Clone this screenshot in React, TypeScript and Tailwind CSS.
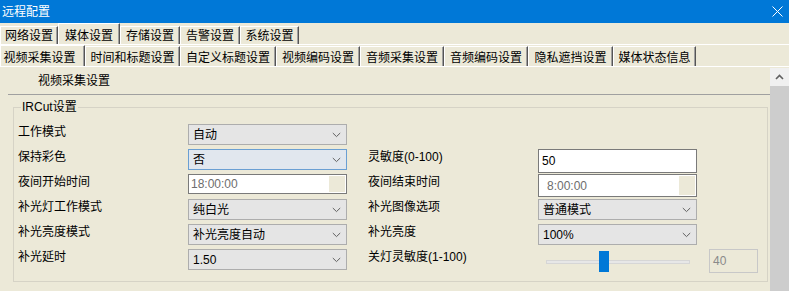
import React from 'react'

const FONT = "font-['Liberation_Sans','Noto_Sans_CJK_SC',sans-serif]"

const mainTabs = [
  { label: '网络设置', w: 'w-[58px]' },
  { label: '媒体设置', w: 'w-[62px]', active: true },
  { label: '存储设置', w: 'w-[60px]' },
  { label: '告警设置', w: 'w-[60px]' },
  { label: '系统设置', w: 'w-[59px]' },
]

const subTabs = [
  { label: '视频采集设置', w: 'w-[85px]', active: true },
  { label: '时间和标题设置', w: 'w-[95px]' },
  { label: '自定义标题设置', w: 'w-[96px]' },
  { label: '视频编码设置', w: 'w-[84px]' },
  { label: '音频采集设置', w: 'w-[84px]' },
  { label: '音频编码设置', w: 'w-[84px]' },
  { label: '隐私遮挡设置', w: 'w-[85px]' },
  { label: '媒体状态信息', w: 'w-[83px]' },
]

function Chevron(): JSX.Element {
  return (
    <svg width="9" height="6" viewBox="0 0 9 6" className="shrink-0">
      <path d="M0.8 1 L4.5 4.6 L8.2 1" fill="none" stroke="#606060" strokeWidth="1" />
    </svg>
  )
}

function Select({ value, focused }: { value: string; focused?: boolean }): JSX.Element {
  return (
    <div
      className={`h-[21px] w-[159px] flex items-center justify-between pl-[4px] pr-[5px] border ${
        focused ? 'border-[#6a9fd3] bg-[#e1e7ee]' : 'border-[#adadad] bg-[#e5e5e5]'
      }`}
    >
      <span className="text-[12px] leading-[16px] text-black">{value}</span>
      <Chevron />
    </div>
  )
}

function TimeInput({ value, tall, pad }: { value: string; tall?: boolean; pad: string }): JSX.Element {
  return (
    <div
      className={`w-[159px] ${tall ? 'h-[23px]' : 'h-[20px]'} border border-[#7a7a7a] bg-white flex items-stretch p-px`}
    >
      <span className={`flex-1 flex items-center ${pad} text-[12px] text-[#6d6d6d]`}>{value}</span>
      <span className="w-[16px] bg-[#ece9d8]" />
    </div>
  )
}

function Label({ children, w = 'w-[170px]' }: { children: React.ReactNode; w?: string }): JSX.Element {
  return <div className={`${w} shrink-0 text-[12px] leading-[16px] text-black`}>{children}</div>
}

function Row({ children }: { children: React.ReactNode }): JSX.Element {
  return <div className="h-[25px] flex items-start">{children}</div>
}

function Spacer(): JSX.Element {
  return <div className="w-[21px] shrink-0" />
}

export default function App(): JSX.Element {
  return (
    <div className={`w-[789px] h-[291px] overflow-hidden bg-[#ece9d8] flex flex-col ${FONT}`}>
      {/* Title bar */}
      <div className="h-[23px] shrink-0 bg-[#0078d7] flex items-center justify-between pl-[2px] pr-[6px]">
        <span className="text-white text-[12px] leading-[16px]">远程配置</span>
        <svg width="11" height="11" viewBox="0 0 11 11">
          <path d="M0.5 0.5 L10.5 10.5 M10.5 0.5 L0.5 10.5" stroke="white" strokeWidth="1" />
        </svg>
      </div>

      {/* Main tabs */}
      <div className="h-[22px] shrink-0 flex items-end border-b border-white">
        {mainTabs.map((t) => (
          <div
            key={t.label}
            className={`${t.w} shrink-0 ${
              t.active ? 'h-[21px] pt-[4px]' : 'h-[18px] pt-[1px]'
            } border-t border-l border-white border-r border-r-[#555] shadow-[inset_-1px_0_#a0a0a0] text-center text-[12px] leading-[16px] text-black`}
          >
            {t.label}
          </div>
        ))}
      </div>

      {/* Sub tabs */}
      <div className="h-[22px] shrink-0 flex items-end border-b border-white">
        {subTabs.map((t) => (
          <div
            key={t.label}
            className={`${t.w} shrink-0 ${
              t.active ? 'h-[21px] pt-[4px] pr-[6px]' : 'h-[20px] pt-[3px]'
            } border-t border-l border-white border-r border-r-[#555] shadow-[inset_-1px_0_#a0a0a0] text-center text-[12px] leading-[16px] text-black`}
          >
            {t.label}
          </div>
        ))}
      </div>

      {/* Content */}
      <div className="flex-1 flex min-h-0">
        <div className="flex-1 flex flex-col">
          <div className="h-[27px] shrink-0 pl-[38px] flex items-center text-[12px] leading-[16px] text-black">
            视频采集设置
          </div>
          <div className="ml-[8px] h-px shrink-0 bg-[#a0a0a0]" />

          {/* IRCut group */}
          <div className="relative mt-[12px] ml-[13px] mr-[2px] h-[175px] border border-[#d6d3c6] pt-[16px] pl-[4px]">
            <span className="absolute left-[7px] top-[-9px] px-[1px] bg-[#ece9d8] text-[12px] leading-[16px] text-black">
              IRCut设置
            </span>

            <Row>
              <Label>工作模式</Label>
              <Select value="自动" />
            </Row>

            <Row>
              <Label>保持彩色</Label>
              <Select value="否" focused />
              <Spacer />
              <Label>灵敏度(0-100)</Label>
              <div className="w-[159px] h-[24px] border border-[#7a7a7a] bg-white flex items-center pl-[3px] text-[12px] text-black">
                50
              </div>
            </Row>

            <Row>
              <Label>夜间开始时间</Label>
              <TimeInput value="18:00:00" pad="pl-[1px]" />
              <Spacer />
              <Label>夜间结束时间</Label>
              <TimeInput value="8:00:00" pad="pl-[7px]" tall />
            </Row>

            <Row>
              <Label>补光灯工作模式</Label>
              <Select value="纯白光" />
              <Spacer />
              <Label>补光图像选项</Label>
              <Select value="普通模式" />
            </Row>

            <Row>
              <Label>补光亮度模式</Label>
              <Select value="补光亮度自动" />
              <Spacer />
              <Label>补光亮度</Label>
              <Select value="100%" />
            </Row>

            <Row>
              <Label>补光延时</Label>
              <Select value="1.50" />
              <Spacer />
              <Label>关灯灵敏度(1-100)</Label>
              <div className="w-[159px] shrink-0 h-[25px] pl-[8px]">
                <div className="relative w-[144px] h-[25px]">
                  <div className="absolute left-0 right-0 top-[11px] h-[4px] bg-[#e7e7e7] border border-[#d6d6d6]" />
                  <div className="absolute left-[53px] top-[2px] w-[10px] h-[21px] bg-[#0078d7]" />
                </div>
              </div>
              <div className="ml-[12px] w-[49px] h-[24px] border border-[#c8c8c8] flex items-center pl-[3px] text-[12px] text-[#8a8a8a]">
                40
              </div>
            </Row>
          </div>
        </div>

        {/* Scrollbar */}
        <div className="w-[19px] shrink-0 flex flex-col pt-px">
          <div className="h-[18px] bg-[#f0f0f0] flex items-center justify-center">
            <svg width="9" height="6" viewBox="0 0 9 6">
              <path d="M1 5 L4.5 1.5 L8 5" fill="none" stroke="#606060" strokeWidth="1.6" />
            </svg>
          </div>
          <div className="flex-1 bg-[#cdcdcd]" />
        </div>
      </div>
    </div>
  )
}
